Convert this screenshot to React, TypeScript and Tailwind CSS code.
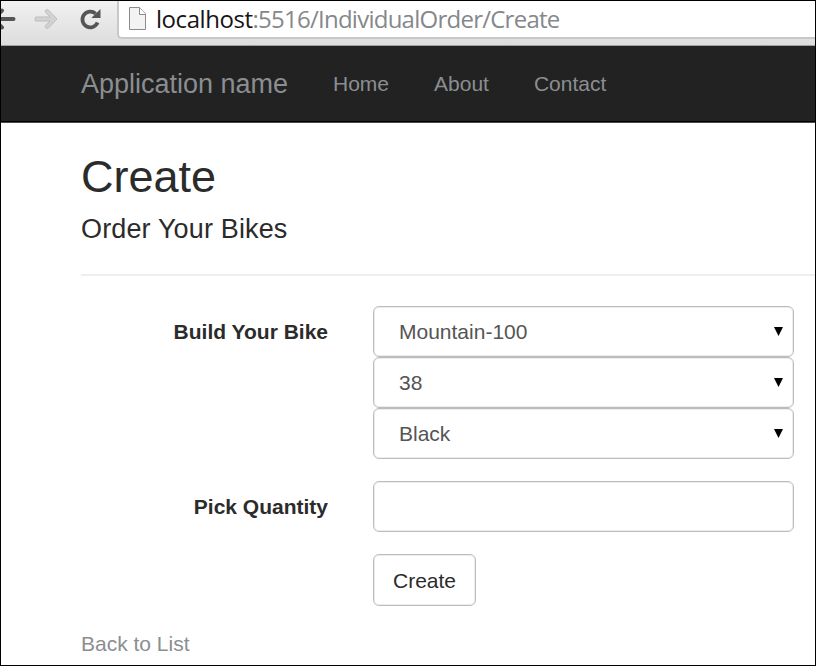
import React from "react";

const bikeOptions = [
  { name: "model", value: "Mountain-100" },
  { name: "size", value: "38" },
  { name: "color", value: "Black" },
];

function BackIcon() {
  return (
    <svg className="h-[24px] w-[16px] shrink-0" viewBox="0 0 16 24" fill="none" stroke="#555" strokeWidth="4">
      <path d="M-2 12H12.5" strokeLinecap="round" />
      <path d="M1 3.5L-8 12L1 20.5" strokeLinecap="round" />
    </svg>
  );
}

function ForwardIcon() {
  return (
    <svg className="ml-[16px] h-[24px] w-[26px] shrink-0" viewBox="0 0 26 24" fill="#d2d2d2" stroke="#bdbdbd" strokeWidth="1">
      <path d="M2.5 10H17L12.5 5.2Q11.8 4 13 3Q14.5 2 15.6 3.2L24 12L15.6 20.8Q14.5 22 13 21Q11.8 20 12.5 18.8L17 14H2.5Q1.7 12 2.5 10Z" />
    </svg>
  );
}

function ReloadIcon() {
  return (
    <svg className="ml-[20px] h-[24px] w-[24px] shrink-0" viewBox="0 0 24 24">
      <path d="M16.6 6.6A7.9 7.9 0 1 0 18.6 15.6" fill="none" stroke="#555" strokeWidth="3.7" />
      <path d="M21.5 2V11H12.3Z" fill="#555" />
    </svg>
  );
}

function PageIcon() {
  return (
    <svg className="h-[24px] w-[18px] shrink-0" viewBox="0 0 18 24" fill="none" stroke="#8c8c8c">
      <path d="M0.5 0.5H10.5L16.5 7V22.5H0.5Z" fill="#f3f3f3" />
      <path d="M10.5 0.5V7.5H16.5" fill="#fff" />
    </svg>
  );
}

function BrowserBar() {
  return (
    <div className="flex h-[45px] items-start border-b border-[#a0a0a0] bg-gradient-to-b from-[#f1f1f1] to-[#dddddd]">
      <div className="flex w-[116px] shrink-0 items-center pt-[6px]">
        <BackIcon />
        <ForwardIcon />
        <ReloadIcon />
      </div>
      <div className="flex h-[38px] grow items-center rounded-bl-[5px] border-b-2 border-l-2 border-[#c8c8c8] bg-white pb-[1px] pl-[10px]">
        <PageIcon />
        <div className="ml-[9px] whitespace-pre font-['Open_Sans','Noto_Sans',sans-serif] text-[24px] leading-[34px] tracking-[-0.75px] text-[#85888b]">
          <span className="tracking-[-0.45px] text-[#151515]">localhost</span>:5516/IndividualOrder/Create
        </div>
      </div>
    </div>
  );
}

function NavBar() {
  return (
    <nav className="flex h-[77px] items-center border-b border-[#4a4a4a] bg-[#222] pl-[80px] text-[#8b8e91] shadow-[inset_0_-1px_0_#000]">
      <a className="w-[252px] text-[27px] leading-[30px]">Application name</a>
      <div className="flex gap-[45px] text-[21px] leading-[30px]">
        <a>Home</a>
        <a>About</a>
        <a>Contact</a>
      </div>
    </nav>
  );
}

function BikeSelect({ value }: { value: string }) {
  return (
    <div className="flex h-[51px] items-center justify-between rounded-[6px] border border-[#bdbdbd] bg-white pr-[10px] pl-[25px] text-[21px] leading-[30px] text-[#555] shadow-[inset_0_0_0_1px_#ececec]">
      <span>{value}</span>
      <svg className="mb-[1px] h-[9px] w-[9px]" viewBox="0 0 9 9">
        <path d="M0 0H9L4.5 9Z" fill="#000" />
      </svg>
    </div>
  );
}

export default function App() {
  return (
    <div className="h-[666px] w-[816px] overflow-hidden border border-black bg-white font-['Liberation_Sans',Arial,sans-serif] text-[#2b2b2b]">
      <BrowserBar />
      <NavBar />
      <main className="pl-[80px]">
        <h2 className="pt-[29px] text-[45px] leading-[50px]">Create</h2>
        <h4 className="mt-[12px] text-[27px] leading-[30px] tracking-[0.15px]">Order Your Bikes</h4>
        <div className="mt-[30px] h-[2px] bg-[#eee]" />
        <form className="mt-[30px] text-[21px] leading-[30px]">
          <div className="flex">
            <label className="mr-[45px] w-[247px] pt-[11px] text-right font-bold">Build Your Bike</label>
            <div className="flex w-[421px] flex-col">
              {bikeOptions.map((option) => (
                <BikeSelect key={option.name} value={option.value} />
              ))}
            </div>
          </div>
          <div className="mt-[22px] flex">
            <label className="mr-[45px] w-[247px] pt-[11px] text-right font-bold">Pick Quantity</label>
            <input className="h-[51px] w-[421px] rounded-[6px] border border-[#bdbdbd] bg-white px-[16px] shadow-[inset_0_0_0_1px_#ececec]" />
          </div>
          <button type="button" className="mt-[22px] ml-[292px] block h-[52px] w-[103px] rounded-[6px] border border-[#bdbdbd] bg-white pt-[2px] shadow-[inset_0_0_0_1px_#ececec]">
            Create
          </button>
        </form>
        <a className="mt-[23px] block text-[21px] leading-[30px] text-[#8b8e91]">Back to List</a>
      </main>
    </div>
  );
}
